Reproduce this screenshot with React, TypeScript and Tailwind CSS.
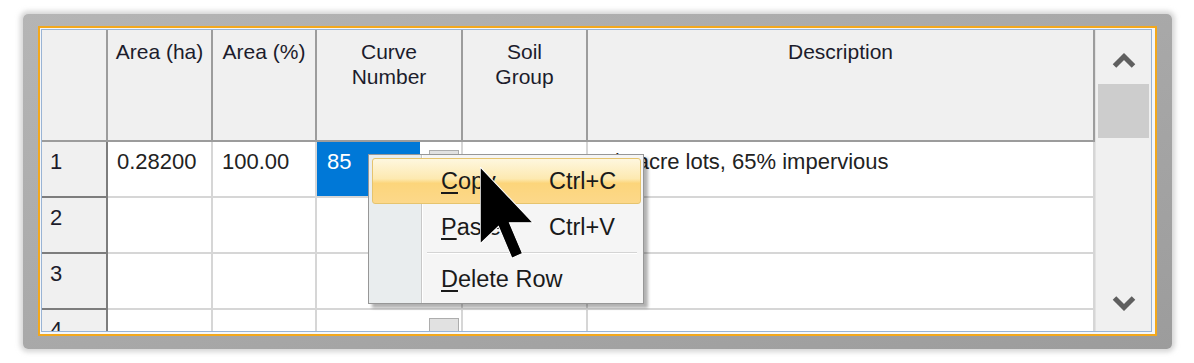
import React from "react";

const rows = [
  { n: "1", ha: "0.28200", pct: "100.00", cn: "85", soil: "", desc: "1/8 acre lots, 65% impervious", sel: true },
  { n: "2", ha: "", pct: "", cn: "", soil: "", desc: "", sel: false },
  { n: "3", ha: "", pct: "", cn: "", soil: "", desc: "", sel: false },
  { n: "4", ha: "", pct: "", cn: "", soil: "", desc: "", sel: false },
];

function Chevron({ up }: { up?: boolean }) {
  return (
    <svg width="24" height="20" viewBox="0 0 24 20">
      <polyline
        points={up ? "2.5,16 12,6.5 21.5,16" : "2.5,4 12,13.5 21.5,4"}
        fill="none"
        stroke="#5f5f5f"
        strokeWidth="5"
        strokeLinejoin="miter"
      />
    </svg>
  );
}

function MenuItem({ u, rest, shortcut, active }: { u: string; rest: string; shortcut?: string; active?: boolean }) {
  return (
    <div
      className={`flex items-center h-[46px] ml-[3px] mr-[2px] pl-[68px] rounded-[3px] border ${
        active
          ? "border-[#e6c46e] bg-[linear-gradient(to_bottom,#fef7df,#fde9b0_45%,#fcd57b_55%,#fcd88a)]"
          : "border-transparent"
      }`}
    >
      <span className="w-[108px] whitespace-nowrap">
        <u className="underline-offset-[3px]">{u}</u>
        {rest}
      </span>
      {shortcut && <span className="whitespace-nowrap">{shortcut}</span>}
    </div>
  );
}

export default function App() {
  const head = "bg-[#f0f0f0] border-r-2 border-b-2 border-[#9c9c9c] text-center pt-[9px] text-[21px] leading-[25px] text-[#1c1c2c]";
  const cell = "bg-white border-r-2 border-b-2 border-[#d6d6d6] pl-[9px] pt-[7px] whitespace-nowrap overflow-hidden";

  return (
    <div className="w-[1194px] h-[363px] bg-white pl-[23px] pt-[14px] font-['Liberation_Sans','Arial',sans-serif] text-[#222]">
      <div className="w-[1149px] h-[335px] pt-[12px] pl-[15px] pr-[15px] pb-[13px] bg-[linear-gradient(to_bottom_right,#b5b5b5,#9c9c9c)] rounded-[5px] shadow-[0_0_5px_3px_rgba(185,185,185,0.6)]">
        <div className="w-full h-full border-2 border-[#f3a81c] bg-[#f4f7fb] pl-px pt-px pr-[3px] pb-[2px]">
          <div className="w-full h-full border border-[#9ab4d4]">
            <div className="relative flex w-full h-full overflow-hidden">
              <div className="grid grid-cols-[66px_105px_104px_146px_125px_507px] grid-rows-[112px_56px_56px_56px_56px] text-[22px] leading-[26px]">
                <div className={head} />
                <div className={head}>Area (ha)</div>
                <div className={head}>Area (%)</div>
                <div className={head}>Curve<br />Number</div>
                <div className={head}>Soil<br />Group</div>
                <div className={head}>Description</div>

                {rows.map((r) => (
                  <React.Fragment key={r.n}>
                    <div className="bg-[#f0f0f0] border-r-2 border-b-2 border-[#7d7d7d] pl-2 pt-[7px] text-[#1c1c2c]">{r.n}</div>
                    <div className={cell}>{r.ha}</div>
                    <div className={cell}>{r.pct}</div>
                    <div className="flex bg-white border-r-2 border-b-2 border-[#d6d6d6]">
                      <div className={`w-[103px] pl-[10px] pt-[7px] ${r.sel ? "bg-[#0078d7] text-white" : ""}`}>{r.cn}</div>
                      <div className="ml-[9px] mt-2 w-[30px] h-[24px] bg-[#e1e1e1] border border-[#adadad]" />
                    </div>
                    <div className={cell}>{r.soil}</div>
                    <div className={`${cell} pl-[12px]`}>{r.desc}</div>
                  </React.Fragment>
                ))}
              </div>

              <div className="w-[56px] bg-[#f0f0f0] flex flex-col border-l border-[#e2e2e2]">
                <div className="h-[54px] pt-[6px] flex items-center justify-center">
                  <Chevron up />
                </div>
                <div className="h-[54px] ml-[2px] mr-[2px] bg-[#cdcdcd]" />
                <div className="flex-1" />
                <div className="h-[54px] flex items-center justify-center">
                  <Chevron />
                </div>
              </div>

              <div className="absolute left-[326px] top-[124px] w-[276px] h-[150px] border border-[#979797] pt-[3px] text-[23.5px] leading-[28px] text-[#1a1a1a] shadow-[4px_4px_3px_rgba(0,0,0,0.3)] bg-[linear-gradient(to_right,#e9edee_52px,#c8c8c8_52px,#c8c8c8_53px,#ffffff_53px,#ffffff_54px,#f5f5f5_54px)]">
                <MenuItem u="C" rest="opy" shortcut="Ctrl+C" active />
                <MenuItem u="P" rest="aste" shortcut="Ctrl+V" />
                <div className="h-[6px] flex flex-col justify-center ml-[58px] mr-[6px]">
                  <div className="h-px bg-[#d4d4d4]" />
                  <div className="h-px bg-white" />
                </div>
                <MenuItem u="D" rest="elete Row" />
              </div>

              <svg className="absolute left-[438px] top-[137px]" width="58" height="96" viewBox="0 0 12 20">
                <polygon
                  points="0,0 0,16 3.8,12.4 6.6,19 8.8,18 6.1,11.6 11,11.6"
                  fill="#000"
                  stroke="#fff"
                  strokeWidth="0.22"
                />
              </svg>
            </div>
          </div>
        </div>
      </div>
    </div>
  );
}
